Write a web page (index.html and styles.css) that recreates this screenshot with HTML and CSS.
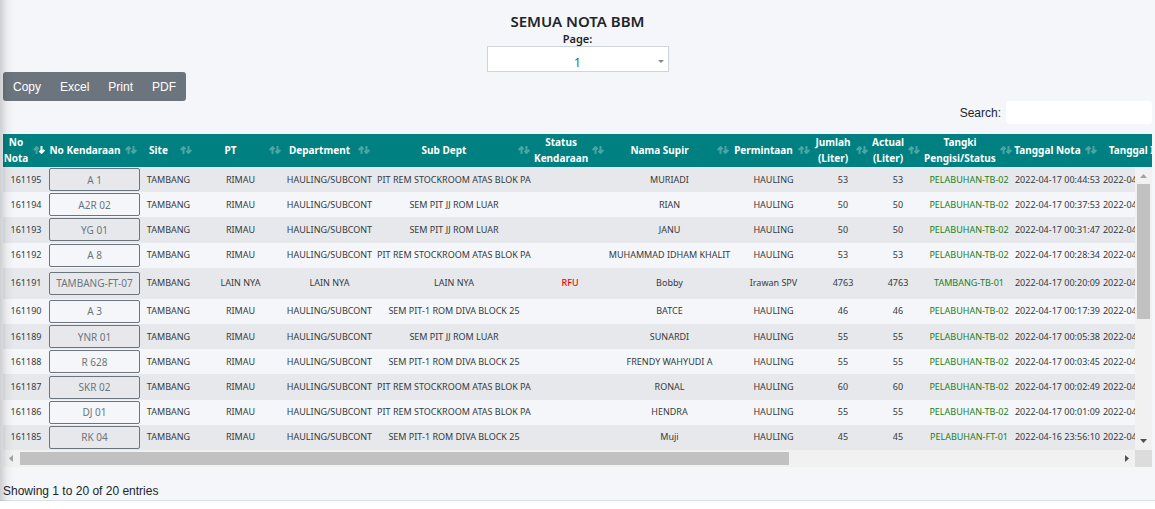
FILE: index.html
```html
<!DOCTYPE html>
<html lang="id">
<head>
<meta charset="utf-8">
<title>Semua Nota BBM</title>
<link rel="stylesheet" href="styles.css">
</head>
<body>
<svg class="defs" aria-hidden="true">
  <symbol id="sort" viewBox="0 0 12 8">
    <path class="up" d="M3.500 8V1M.6 4 3.500 1.100 5.600 3.200"/>
    <path class="down" d="M8.500 0V7M6.400 4.800 8.500 6.900 11.400 4"/>
  </symbol>
</svg>
<main class="page">
  <header class="heading">
    <h1 class="title">SEMUA NOTA BBM</h1>
    <label class="page-label" for="page">Page:</label>
    <div class="select-wrap">
      <select id="page" class="page-select"><option>1</option></select>
      <svg class="caret" viewBox="0 0 6 3" aria-hidden="true"><path d="M0 0h6L3 3z"/></svg>
    </div>
  </header>
  <div class="btn-group">
    <button class="btn" type="button">Copy</button>
    <button class="btn" type="button">Excel</button>
    <button class="btn" type="button">Print</button>
    <button class="btn" type="button">PDF</button>
  </div>
  <div class="search">
    <label for="search">Search:</label>
    <input id="search" class="search-input" type="search">
  </div>
  <section class="scroll">
    <div class="scroll-head"><table class="grid" id="head"></table></div>
    <div class="scroll-body"><table class="grid rows" id="body"></table></div>
    <div class="vbar" aria-hidden="true">
      <svg class="arrow" viewBox="0 0 17 17"><path class="off" d="M5 11h7L8.500 7z"/></svg>
      <div class="vthumb"></div>
      <svg class="arrow end" viewBox="0 0 17 17"><path d="M5 6h7L8.500 10z"/></svg>
    </div>
    <div class="hbar" aria-hidden="true">
      <svg class="arrow" viewBox="0 0 17 17"><path class="off" d="M10 5v7L6 8.500z"/></svg>
      <div class="htrack"><div class="hthumb"></div></div>
      <svg class="arrow" viewBox="0 0 17 17"><path d="M7 5v7L11 8.500z"/></svg>
    </div>
    <div class="corner"></div>
  </section>
  <p class="info">Showing 1 to 20 of 20 entries</p>
  <div class="edge-shadow"></div>
</main>
<script src="app.js"></script>
</body>
</html>
```
FILE: app.js
```js
const widths = [46, 92, 55, 89, 89, 160, 72, 127, 81, 58, 52, 90, 87, 89];
const titles = ["No Nota", "No Kendaraan", "Site", "PT", "Department", "Sub Dept", "Status Kendaraan",
  "Nama Supir", "Permintaan", "Jumlah (Liter)", "Actual (Liter)", "Tangki Pengisi/Status", "Tanggal Nota", "Tanggal Isi"];
const H = "HAULING/SUBCONT", REM = "PIT REM STOCKROOM ATAS BLOK PA", LUAR = "SEM PIT JJ ROM LUAR",
  DIVA = "SEM PIT-1 ROM DIVA BLOCK 25", TB = "PELABUHAN-TB-02";
const rows = [
  [161195, "A 1", "RIMAU", H, REM, "", "MURIADI", "HAULING", 53, TB, "2022-04-17 00:44:53"],
  [161194, "A2R 02", "RIMAU", H, LUAR, "", "RIAN", "HAULING", 50, TB, "2022-04-17 00:37:53"],
  [161193, "YG 01", "RIMAU", H, LUAR, "", "JANU", "HAULING", 50, TB, "2022-04-17 00:31:47"],
  [161192, "A 8", "RIMAU", H, REM, "", "MUHAMMAD IDHAM KHALIT", "HAULING", 53, TB, "2022-04-17 00:28:34"],
  [161191, "TAMBANG-FT-07", "LAIN NYA", "LAIN NYA", "LAIN NYA", "RFU", "Bobby", "Irawan SPV", 4763, "TAMBANG-TB-01", "2022-04-17 00:20:09"],
  [161190, "A 3", "RIMAU", H, DIVA, "", "BATCE", "HAULING", 46, TB, "2022-04-17 00:17:39"],
  [161189, "YNR 01", "RIMAU", H, LUAR, "", "SUNARDI", "HAULING", 55, TB, "2022-04-17 00:05:38"],
  [161188, "R 628", "RIMAU", H, DIVA, "", "FRENDY WAHYUDI A", "HAULING", 55, TB, "2022-04-17 00:03:45"],
  [161187, "SKR 02", "RIMAU", H, REM, "", "RONAL", "HAULING", 60, TB, "2022-04-17 00:02:49"],
  [161186, "DJ 01", "RIMAU", H, REM, "", "HENDRA", "HAULING", 55, TB, "2022-04-17 00:01:09"],
  [161185, "RK 04", "RIMAU", H, DIVA, "", "Muji", "HAULING", 45, "PELABUHAN-FT-01", "2022-04-16 23:56:10"]
];
const cols = "<colgroup>" + widths.map(w => `<col style="width:${w}px">`).join("") + "</colgroup>";
document.getElementById("head").innerHTML = cols + "<thead><tr>" + titles.map((t, i) =>
  `<th scope="col"><div class="th"><span class="th-text">${t}</span><svg class="sort${i ? "" : " desc"}"><use href="#sort"/></svg></div></th>`).join("") + "</tr></thead>";
document.getElementById("body").innerHTML = cols + "<tbody>" + rows.map(r => {
  const [no, unit, pt, dept, sub, status, name, ask, qty, tank, date] = r;
  return `<tr class="${status ? "tall" : ""}"><td>${no}</td><td class="unit-cell"><button type="button" class="unit">${unit}</button></td><td>TAMBANG</td><td>${pt}</td><td>${dept}</td><td>${sub}</td><td class="status">${status}</td><td>${name}</td><td>${ask}</td><td>${qty}</td><td>${qty}</td><td class="tank">${tank}</td><td>${date}</td><td>${date}</td></tr>`;
}).join("") + "</tbody>";
```
FILE: styles.css
```css
* { box-sizing: border-box; }
body { margin: 0; background: #fff; color: #212529; font-family: "Liberation Sans", Arial, sans-serif; font-size: 12px; }
.defs { display: none; }
.page { position: relative; padding: 10px 3px 0; background: #f4f6f9; border-bottom: 1px solid #dee2e6; }
.edge-shadow { position: absolute; top: 0; bottom: -9px; left: 0; width: 14px; pointer-events: none; background: linear-gradient(90deg, rgba(0,0,0,.16), rgba(0,0,0,.04) 50%, rgba(0,0,0,0)); }
.heading { display: flex; flex-direction: column; align-items: center; font-family: "Noto Sans", sans-serif; }
.title { margin: 0; font-size: 15px; line-height: 22px; font-weight: 600; }
.page-label { font-size: 11px; line-height: 14px; font-weight: 600; }
.select-wrap { position: relative; width: 182px; }
.page-select { display: block; appearance: none; width: 100%; height: 26px; padding: 6px 0 0; border: 1px solid #ced4da; border-radius: 0; background: #fff; color: #1c6ca1; font: 12px "Noto Sans", sans-serif; text-align: center; text-align-last: center; }
.caret { position: absolute; right: 5px; top: 14px; width: 6px; height: 3px; fill: #888; }
.btn-group { display: inline-flex; border-radius: 3px; background: #6c757d; overflow: hidden; }
.btn { padding: 0 10px; height: 29px; border: 0; background: none; color: #fff; font: 12px "Liberation Sans", Arial, sans-serif; }
.btn + .btn { margin-left: -1px; }
.search { display: flex; justify-content: flex-end; align-items: center; gap: 5px; line-height: 22px; }
.search-input { width: 146px; height: 23px; border: 0; border-radius: 3px; background: #fff; font: inherit; }
.scroll { margin-top: 10px; display: grid; grid-template-columns: minmax(0, 1fr) 17px; }
.scroll-head { grid-column: 1 / 3; overflow: hidden; background: teal; }
.scroll-body { overflow: hidden; height: 283px; }
.grid { table-layout: fixed; width: 1187px; border-collapse: collapse; font-family: "Noto Sans", sans-serif; }
.grid th { height: 33px; padding: 0 0 1px; color: #fff; font-size: 10px; line-height: 16px; font-weight: 700; }
.th { display: flex; align-items: center; gap: 4px; padding-right: 4px; }
.th-text { flex: 1; text-align: center; }
.sort { --up: .3; --down: .3; flex: none; width: 12px; height: 8px; fill: none; stroke: #fff; stroke-width: 2; }
.sort.desc { --down: 1; }
.up { opacity: var(--up); }
.down { opacity: var(--down); }
.rows { height: 283px; color: #343a40; }
.rows td { height: 25px; padding: 0; text-align: center; font-size: 9px; line-height: 14px; white-space: nowrap; }
.rows .tall td { height: 31px; }
.rows tr:nth-child(odd) { background: #e7e8ec; }
.rows .unit-cell { padding: 0 1px 0 0; }
.unit { display: block; width: 100%; height: 23px; padding: 0; border: 1px solid #6c757d; border-radius: 2px; background: none; color: #6c757d; font: 10px "Noto Sans", sans-serif; }
.rows .status { color: #f00; font-weight: 500; }
.rows .tank { color: #1b7f1b; }
.vbar { display: flex; flex-direction: column; background: #f1f1f1; }
.arrow { flex: none; display: block; width: 17px; height: 17px; fill: #505050; }
.arrow .off { fill: #a3a3a3; }
.arrow.end { margin-top: auto; }
.vthumb { margin: 0 2px; height: 135px; background: #c1c1c1; }
.hbar { display: flex; background: #f1f1f1; }
.htrack { flex: 1; padding: 2px 0; }
.hthumb { width: 70%; height: 13px; background: #c1c1c1; }
.corner { background: #dcdcdc; }
.info { margin: 0; padding-top: 15px; line-height: 18px; }
```
